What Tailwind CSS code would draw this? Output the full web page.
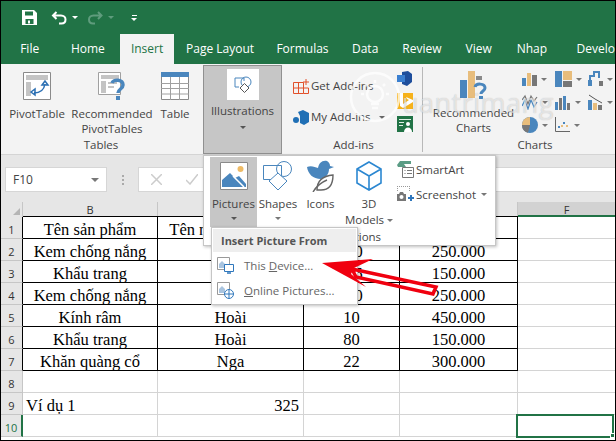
<!DOCTYPE html>
<html lang="en">

<head>
  <meta charset="UTF-8">
  <title>Excel Insert Pictures</title>
  <script src="https://cdn.jsdelivr.net/npm/@tailwindcss/browser@4"></script>
</head>

<body class="bg-white">
  <div class="relative w-[616px] h-[441px] overflow-hidden border border-black font-['Open_Sans',sans-serif] text-[11.5px] text-[#444]">

    <!-- title bar -->
    <div class="flex items-center h-[33px] bg-[#217346] pl-[21px]">
      <svg class="w-[15px] h-[15px]" viewBox="0 0 15 15"><path d="M0 0h12l3 3v12H0z" fill="#fff"/><path d="M3 1.500h8v4H3zM3.500 9h8v5h-8z" fill="#217346"/><path d="M6 10.500h2v3H6z" fill="#fff"/></svg>
      <svg class="w-[16px] h-[14px] ml-[14px]" viewBox="0 0 16 14" fill="none" stroke="#fff" stroke-width="2"><path d="M5.500 1 2 4.500 5.500 8M2 4.500h8c3 0 4.500 2 4.500 4s-1 4-4 4H8"/></svg>
      <div class="ml-[5px] border-x-[3px] border-t-[3px] border-x-transparent border-t-white"></div>
      <svg class="w-[15px] h-[14px] ml-[10px]" viewBox="0 0 15 14" fill="none" stroke="#5f9c7d" stroke-width="2"><path d="M10 1l3.500 3.500L10 8M13.500 4.500h-8c-3 0-4.500 2-4.500 4s1 4 4 4h2"/></svg>
      <div class="ml-[5px] border-x-[3px] border-t-[3px] border-x-transparent border-t-[#5f9c7d]"></div>
      <div class="ml-[17px] flex flex-col items-center gap-[2px]">
        <div class="w-[5px] h-px bg-white"></div>
        <div class="border-x-[3px] border-t-[3px] border-x-transparent border-t-white"></div>
      </div>
    </div>

    <!-- tabs -->
    <div class="flex h-[30px] bg-[#217346] text-white text-[12px]">
      <div class="w-[55px] flex items-center justify-center pl-[3px]">File</div>
      <div class="w-[66px] flex items-center justify-center">Home</div>
      <div class="w-[54px] flex items-center justify-center bg-[#f3f3f3] text-[#217346]">Insert</div>
      <div class="w-[93px] flex items-center justify-center pl-[1px]">Page Layout</div>
      <div class="w-[75px] flex items-center justify-center">Formulas</div>
      <div class="w-[52px] flex items-center justify-center">Data</div>
      <div class="w-[63px] flex items-center justify-center">Review</div>
      <div class="w-[52px] flex items-center justify-center">View</div>
      <div class="w-[56px] flex items-center justify-center">Nhap</div>
      <div class="pl-[17px] flex items-center whitespace-nowrap">Develo</div>
    </div>

    <!-- ribbon -->
    <div class="flex h-[91px] bg-[#f3f3f3] border-b border-[#d4d4d4]">
      <!-- tables -->
      <div class="w-[202px] flex flex-col">
        <div class="flex h-[72px] pt-[8px] text-center leading-[15px]">
          <div class="w-[72px] flex flex-col items-center">
            <svg class="w-[28px] h-[28px] mb-[6px]" viewBox="0 0 28 28"><path d="M.5.500h27v27H.5z" fill="#fff" stroke="#8a8a8a"/><path d="M3 3h22v5H3zM3 10h5v14H3z" fill="#c4c4c4"/><path d="M11 21c6 0 10-3 11-9M8 20l4-3v6zM22 9l-3 4h6z" fill="none" stroke="#2b6fb3" stroke-width="1.500"/></svg>
            <span>PivotTable</span>
          </div>
          <div class="w-[78px] flex flex-col items-center">
            <svg class="w-[28px] h-[28px] mb-[6px]" viewBox="0 0 28 28"><path d="M.5.500h22v22H.5z" fill="#fff" stroke="#a0a0a0"/><path d="M3 3h18v4H3zM3 9h5v12H3zM10 10h9v2h-9zM10 14h6v2h-6z" fill="#c4c4c4"/><path d="M14 11c1-4 11-4 11 2 0 4-5 4-5 8" fill="none" stroke="#4a86bd" stroke-width="3.500"/><path d="M18 24h4v4h-4z" fill="#4a86bd"/></svg>
            <span>Recommended<br>PivotTables</span>
          </div>
          <div class="w-[48px] flex flex-col items-center">
            <svg class="w-[28px] h-[28px] mb-[6px]" viewBox="0 0 28 28"><path d="M.5.500h27v27H.5z" fill="#fff" stroke="#8a8a8a"/><path d="M0 0h28v5H0z" fill="#4a86bd"/><path d="M0 11.500h28M0 16.500h28M0 22h28M9.500 5v23M18.500 5v23" stroke="#a0a0a0" fill="none"/></svg>
            <span>Table</span>
          </div>
        </div>
        <div class="text-center mt-auto pb-[1px] pr-[2px]">Tables</div>
      </div>

      <!-- illustrations -->
      <div class="w-[79px] flex flex-col items-center bg-[#c6c6c6] border border-[#909090] pt-[3px] mt-[1px]">
        <div class="w-[32px] h-[31px] bg-white flex items-center justify-center">
          <svg class="w-[18px] h-[17px]" viewBox="0 0 18 17" fill="none" stroke="#4a86bd"><path d="M10 5V2H1v9h4"/><circle cx="12" cy="6" r="5"/><path d="M10.500 7.500 15 12l-4.500 4.500L6 12z" fill="#fff" stroke="#555"/></svg>
        </div>
        <span class="mt-[3px] leading-[15px]">Illustrations</span>
        <div class="mt-[8px] border-x-[3px] border-t-[3px] border-x-transparent border-t-[#555]"></div>
      </div>

      <!-- add-ins -->
      <div class="w-[141px] flex flex-col relative">
        <div class="flex h-[72px] pl-[11px] pt-[6px]">
          <div class="w-[104px] flex flex-col gap-[15px] pt-[8px]">
            <div class="flex items-center gap-[2px] h-[16px]">
              <svg class="w-[16px] h-[15px]" viewBox="0 0 16 15" fill="none" stroke="#e2512b"><path d="M.5 3.500h10v11H.5zM.5 9h15v5.500H10.500M5.500 3.500v11M13 0v6M10 3h6"/></svg>
              <span>Get Add-ins</span>
            </div>
            <div class="flex items-center gap-[2px] h-[16px]">
              <svg class="w-[16px] h-[15px]" viewBox="0 0 16 15"><path d="M5 2l5-2 6 3v9l-5 3-4-2V6z" fill="#1f6fb5"/><circle cx="3" cy="10" r="3" fill="#1f6fb5"/></svg>
              <span>My Add-ins</span>
              <div class="ml-[6px] border-x-[3px] border-t-[3px] border-x-transparent border-t-[#666]"></div>
            </div>
          </div>
          <div class="flex flex-col gap-[7px] pt-[1px]">
            <svg class="w-[15px] h-[15px]" viewBox="0 0 15 15"><path d="M5 1l6-1 4 3v8l-5 4-5-2z" fill="#1e4e9c"/><path d="M0 4h8v7H0z" fill="#3a7fd0"/></svg>
            <svg class="w-[16px] h-[16px]" viewBox="0 0 16 16"><path d="M0 0h16v16H0z" fill="#f6b21b"/><path d="M3 0h3v11l6-4-2-1-1-2 7 3v2l-10 6-3-2z" fill="#fff"/></svg>
            <svg class="w-[16px] h-[16px]" viewBox="0 0 16 16"><path d="M0 0h16v16H0z" fill="#217346"/><path d="M2 3h12v1H2zM2 6h5v1H2zM2 9h4v1H2z" fill="#dff0e6"/><circle cx="11" cy="8" r="2" fill="#fff"/><path d="M7 16c0-6 8-6 8 0z" fill="#fff"/></svg>
          </div>
        </div>
        <div class="text-center mt-auto pb-[1px] pl-[2px]">Add-ins</div>
        <div class="absolute right-0 top-[3px] bottom-[2px] w-px bg-[#b8b8b8]"></div>
      </div>

      <!-- charts -->
      <div class="flex-1 flex flex-col">
        <div class="flex h-[72px] pt-[7px]">
          <div class="w-[97px] flex flex-col items-center text-center leading-[15px] pl-[4px]">
            <svg class="w-[28px] h-[28px] mb-[6px] shrink-0" viewBox="0 0 28 28"><path d="M0 9h7v18H0z" fill="#4a86bd"/><path d="M8 0h7v27H8z" fill="#e8bd7c"/><path d="M16 5h6v4h-6z" fill="#8a8a8a"/><path d="M15 16c1-4 10-4 10 1 0 3-4 3-4 6" fill="none" stroke="#4a86bd" stroke-width="3"/><path d="M19 25h4v3h-4z" fill="#4a86bd"/></svg>
            <span class="whitespace-nowrap">Recommended<br>Charts</span>
          </div>
          <div class="grid grid-cols-[33px_33px_20px] grid-rows-[23px_23px_23px] pl-[2px]">
            <div class="flex items-start gap-[4px]"><svg class="w-[15px] h-[15px]" viewBox="0 0 15 15"><path d="M0 7h4v8H0z" fill="#4a86bd"/><path d="M5 2h4v13H5z" fill="#e8bd7c"/><path d="M10 4h5v11h-5z" fill="#777"/></svg><div class="mt-[7px] border-x-[3px] border-t-[3px] border-x-transparent border-t-[#777]"></div></div>
            <div class="flex items-start gap-[4px]"><svg class="w-[17px] h-[16px] shrink-0" viewBox="0 0 17 16"><path d="M0 0h7v16H0z" fill="#4a86bd"/><path d="M8 0h9v9H8z" fill="#e8bd7c"/><path d="M8 10h9v6H8z" fill="#777"/></svg><div class="mt-[7px] border-x-[3px] border-t-[3px] border-x-transparent border-t-[#777]"></div></div>
            <div class="flex items-start gap-[4px]"><svg class="w-[15px] h-[15px] shrink-0" viewBox="0 0 15 15"><path d="M0 9h4v6H0z" fill="#4a86bd"/><path d="M2 9V5h4V1h5v6" fill="none" stroke="#4a86bd" stroke-width="2"/><path d="M11 10h4v5h-4z" fill="#777"/></svg><div class="mt-[7px] border-x-[3px] border-t-[3px] border-x-transparent border-t-[#777]"></div></div>
            <div class="flex items-start gap-[4px]"><svg class="w-[16px] h-[16px] shrink-0" viewBox="0 0 16 16" fill="none" stroke-width="1.200"><path d="M0 6l3-4 3 8 3-8 3 5 3-4" stroke="#777"/><path d="M0 12l3-6 3 9 3-9 3 7 3-5" stroke="#4a86bd"/></svg><div class="mt-[7px] border-x-[3px] border-t-[3px] border-x-transparent border-t-[#777]"></div></div>
            <div class="flex items-start gap-[4px]"><svg class="w-[16px] h-[16px] shrink-0" viewBox="0 0 16 16"><path d="M0 8h3v8H0zM8 2h3v14H8z" fill="#4a86bd"/><path d="M4 4h3v12H4zM12 9h3v7h-3z" fill="#777"/></svg><div class="mt-[7px] border-x-[3px] border-t-[3px] border-x-transparent border-t-[#777]"></div></div>
            <div class="flex items-start gap-[4px]"><svg class="w-[15px] h-[16px] shrink-0" viewBox="0 0 15 16"><path d="M0 6h4v10H0z" fill="#4a86bd"/><path d="M5 9h4v7H5z" fill="#e8bd7c"/><path d="M10 11h4v5h-4z" fill="#777"/><path d="M1 1l6 4 7 4" stroke="#555" fill="none"/></svg><div class="mt-[7px] border-x-[3px] border-t-[3px] border-x-transparent border-t-[#777]"></div></div>
            <div class="flex items-start gap-[4px]"><svg class="w-[16px] h-[16px] shrink-0" viewBox="0 0 16 16"><circle cx="8" cy="8" r="8" fill="#4a86bd"/><path d="M8 8V0A8 8 0 0 0 0 8z" fill="#e8bd7c"/><path d="M8 8H0a8 8 0 0 0 6 7.800z" fill="#777"/></svg><div class="mt-[7px] border-x-[3px] border-t-[3px] border-x-transparent border-t-[#777]"></div></div>
            <div class="flex items-start gap-[4px]"><svg class="w-[15px] h-[15px] shrink-0" viewBox="0 0 15 15"><path d="M.5 0v14.500H15" fill="none" stroke="#666"/><path d="M3 9h2v2H3zM8 5h2v2H8z" fill="#4a86bd"/><path d="M6 8h2v2H6zM11 8h2v2h-2z" fill="#e8bd7c"/></svg><div class="mt-[7px] border-x-[3px] border-t-[3px] border-x-transparent border-t-[#777]"></div></div>
          </div>
        </div>
        <div class="text-center mt-auto pb-[1px] pl-[32px]">Charts</div>
      </div>
    </div>

    <!-- formula bar -->
    <div class="h-[47px] bg-[#e6e6e6] pt-[12px] flex items-start">
      <div class="ml-[4px] w-[102px] h-[25px] bg-white border border-[#d6d6d6] flex items-center justify-between pl-[7px] pr-[7px] text-[12px]">
        <span>F10</span>
        <div class="border-x-[4px] border-t-[4px] border-x-transparent border-t-[#777]"></div>
      </div>
      <div class="ml-[15px] mt-[8px] flex flex-col gap-[2px]">
        <div class="w-[2px] h-[2px] bg-[#aaa]"></div>
        <div class="w-[2px] h-[2px] bg-[#aaa]"></div>
        <div class="w-[2px] h-[2px] bg-[#aaa]"></div>
      </div>
      <div class="ml-[14px] flex-1 h-[25px] bg-white border-y border-l border-[#d6d6d6] flex items-center pl-[12px] gap-[24px]">
        <svg class="w-[11px] h-[11px]" viewBox="0 0 11 11" stroke="#ccc" stroke-width="1.500"><path d="M0 0l11 11M11 0 0 11"/></svg>
        <svg class="w-[12px] h-[11px]" viewBox="0 0 12 11" fill="none" stroke="#ccc" stroke-width="1.500"><path d="M0 6l4 4 8-10"/></svg>
      </div>
    </div>

    <!-- sheet -->
    <div class="font-['Liberation_Serif',serif] text-[16.500px] leading-[26px] text-black">
      <!-- column headers -->
      <div class="flex h-[15px] bg-[#e6e6e6] font-['Open_Sans',sans-serif] text-[11px] leading-[16px] text-[#333] text-center">
        <div class="w-[22px] border-r border-[#c6c6c6] relative">
          <div class="absolute right-[2px] bottom-[2px] border-l-[7px] border-b-[7px] border-l-transparent border-b-[#b5b5b5]"></div>
        </div>
        <div class="w-[135px] border-r border-[#c6c6c6]">B</div>
        <div class="w-[146px] border-r border-[#c6c6c6]">C</div>
        <div class="w-[96px] border-r border-[#c6c6c6]">D</div>
        <div class="w-[118px] border-r border-[#c6c6c6]">E</div>
        <div class="flex-1 bg-[#d2d2d2] border-b-2 border-[#217346]">F</div>
      </div>

      <div class="flex h-[22px]"><div class="w-[22px] bg-[#e6e6e6] border-r border-b border-r-black border-b-[#c6c6c6] font-['Open_Sans',sans-serif] text-[11px] leading-[25px] text-[#333] text-center">1</div><div class="w-[135px] text-center border-r border-y border-black -mt-px h-[23px]">Tên sản phẩm</div><div class="w-[146px] text-center border-r border-y border-black -mt-px h-[23px] whitespace-nowrap overflow-hidden">Tên nhân viên bán</div><div class="w-[96px] text-center border-r border-y border-black -mt-px h-[23px]">Số lượng</div><div class="w-[118px] text-center border-r border-y border-black -mt-px h-[23px]">Giá</div><div class="flex-1 border-b border-[#d4d4d4]"></div></div>
      <div class="flex h-[22px]"><div class="w-[22px] bg-[#e6e6e6] border-r border-b border-r-black border-b-[#c6c6c6] font-['Open_Sans',sans-serif] text-[11px] leading-[25px] text-[#333] text-center">2</div><div class="w-[135px] text-center border-r border-b border-black">Kem chống nắng</div><div class="w-[146px] text-center border-r border-b border-black">Hoài</div><div class="w-[96px] pl-[6px] text-center border-r border-b border-black">50</div><div class="w-[118px] text-center border-r border-b border-black">250.000</div><div class="flex-1 border-b border-[#d4d4d4]"></div></div>
      <div class="flex h-[22px]"><div class="w-[22px] bg-[#e6e6e6] border-r border-b border-r-black border-b-[#c6c6c6] font-['Open_Sans',sans-serif] text-[11px] leading-[25px] text-[#333] text-center">3</div><div class="w-[135px] text-center border-r border-b border-black">Khẩu trang</div><div class="w-[146px] text-center border-r border-b border-black">Nga</div><div class="w-[96px] pl-[6px] text-center border-r border-b border-black">35</div><div class="w-[118px] text-center border-r border-b border-black">150.000</div><div class="flex-1 border-b border-[#d4d4d4]"></div></div>
      <div class="flex h-[22px]"><div class="w-[22px] bg-[#e6e6e6] border-r border-b border-r-black border-b-[#c6c6c6] font-['Open_Sans',sans-serif] text-[11px] leading-[25px] text-[#333] text-center">4</div><div class="w-[135px] text-center border-r border-b border-black">Kem chống nắng</div><div class="w-[146px] text-center border-r border-b border-black">Nga</div><div class="w-[96px] pl-[6px] text-center border-r border-b border-black">20</div><div class="w-[118px] text-center border-r border-b border-black">250.000</div><div class="flex-1 border-b border-[#d4d4d4]"></div></div>
      <div class="flex h-[22px]"><div class="w-[22px] bg-[#e6e6e6] border-r border-b border-r-black border-b-[#c6c6c6] font-['Open_Sans',sans-serif] text-[11px] leading-[25px] text-[#333] text-center">5</div><div class="w-[135px] text-center border-r border-b border-black">Kính râm</div><div class="w-[146px] text-center border-r border-b border-black">Hoài</div><div class="w-[96px] text-center border-r border-b border-black">10</div><div class="w-[118px] text-center border-r border-b border-black">450.000</div><div class="flex-1 border-b border-[#d4d4d4]"></div></div>
      <div class="flex h-[22px]"><div class="w-[22px] bg-[#e6e6e6] border-r border-b border-r-black border-b-[#c6c6c6] font-['Open_Sans',sans-serif] text-[11px] leading-[25px] text-[#333] text-center">6</div><div class="w-[135px] text-center border-r border-b border-black">Khẩu trang</div><div class="w-[146px] text-center border-r border-b border-black">Hoài</div><div class="w-[96px] text-center border-r border-b border-black">80</div><div class="w-[118px] text-center border-r border-b border-black">150.000</div><div class="flex-1 border-b border-[#d4d4d4]"></div></div>
      <div class="flex h-[22px]"><div class="w-[22px] bg-[#e6e6e6] border-r border-b border-r-black border-b-[#c6c6c6] font-['Open_Sans',sans-serif] text-[11px] leading-[25px] text-[#333] text-center">7</div><div class="w-[135px] text-center border-r border-b border-black">Khăn quàng cổ</div><div class="w-[146px] text-center border-r border-b border-black">Nga</div><div class="w-[96px] text-center border-r border-b border-black">22</div><div class="w-[118px] text-center border-r border-b border-black">300.000</div><div class="flex-1 border-b border-[#d4d4d4]"></div></div>
      <div class="flex h-[22px]"><div class="w-[22px] bg-[#e6e6e6] border-r border-b border-r-[#c6c6c6] border-b-[#c6c6c6] font-['Open_Sans',sans-serif] text-[11px] leading-[25px] text-[#333] text-center">8</div><div class="w-[135px] border-r border-b border-[#d4d4d4]"></div><div class="w-[146px] border-r border-b border-[#d4d4d4]"></div><div class="w-[96px] border-r border-b border-[#d4d4d4]"></div><div class="w-[118px] border-r border-b border-[#d4d4d4]"></div><div class="flex-1 border-b border-[#d4d4d4]"></div></div>
      <div class="flex h-[22px]"><div class="w-[22px] bg-[#e6e6e6] border-r border-b border-r-[#c6c6c6] border-b-[#c6c6c6] font-['Open_Sans',sans-serif] text-[11px] leading-[25px] text-[#333] text-center">9</div><div class="w-[135px] pl-[3px] border-r border-b border-[#d4d4d4]">Ví dụ 1</div><div class="w-[146px] pr-[4px] text-right border-r border-b border-[#d4d4d4]">325</div><div class="w-[96px] border-r border-b border-[#d4d4d4]"></div><div class="w-[118px] border-r border-b border-[#d4d4d4]"></div><div class="flex-1 border-b border-[#d4d4d4]"></div></div>
      <div class="flex h-[22px]"><div class="w-[22px] bg-[#e6e6e6] border-r-2 border-b border-r-[#217346] border-b-[#c6c6c6] font-['Open_Sans',sans-serif] text-[11px] leading-[25px] text-[#217346] text-center">10</div><div class="w-[135px] border-r border-b border-[#d4d4d4]"></div><div class="w-[146px] border-r border-b border-[#d4d4d4]"></div><div class="w-[96px] border-r border-b border-[#d4d4d4]"></div><div class="w-[118px] border-r border-b border-[#d4d4d4]"></div><div class="flex-1 relative border-b border-[#d4d4d4]">
        <div class="absolute -left-[2px] -top-[1px] w-[98px] h-[24px] border-2 border-[#217346]"></div>
        <div class="absolute left-[92px] top-[18px] w-[5px] h-[5px] bg-[#217346] border border-white"></div>
      </div></div>
    </div>

    <!-- watermark -->
    <div class="absolute left-[348px] top-[70px] flex items-center gap-[1px] text-white/60 font-['Open_Sans',sans-serif] text-[27px] leading-[34px] tracking-[0.5px] [text-shadow:0_0_1px_rgba(0,0,0,0.25)] pointer-events-none">
      <svg class="w-[52px] h-[52px]" viewBox="0 0 52 52" fill="none" stroke="#fff" stroke-opacity=".75" stroke-width="2.500"><circle cx="26" cy="26" r="24"/><circle cx="26" cy="23" r="8"/><path d="M22 33h8M23 37h6M26 9v3M12 23h3M37 23h3M16 13l2 2M36 13l-2 2"/></svg>
      <span class="pt-[12px]">uantrimang</span>
    </div>

    <!-- illustrations dropdown -->
    <div class="absolute left-[202px] top-[154px] w-[293px] h-[91px] bg-white border border-[#c6c6c6] shadow-[1px_1px_3px_rgba(0,0,0,0.25)] flex flex-col leading-[15px]">
      <div class="flex h-[72px] pt-[1px] pl-[6px]">
        <div class="w-[47px] h-[70px] bg-[#c6c6c6] flex flex-col items-center pt-[5px]">
          <svg class="w-[28px] h-[28px]" viewBox="0 0 28 28"><path d="M.5.500h27v27H.5z" fill="#fff" stroke="#8a8a8a"/><circle cx="20.500" cy="7" r="3" fill="#eebb66"/><path d="M2 25V18L10 11l5 5 4-2 7 8v3z" fill="#4a86bd"/><path d="M13 14l11 11" stroke="#fff" stroke-width="1.500"/></svg>
          <span class="mt-[6px]">Pictures</span>
          <div class="mt-[6px] border-x-[3px] border-t-[3px] border-x-transparent border-t-[#555]"></div>
        </div>
        <div class="w-[42px] flex flex-col items-center pt-[4px]">
          <svg class="w-[30px] h-[30px]" viewBox="0 0 30 30" fill="none" stroke="#4a86bd"><path d="M.5 4.500h18v14H.5z"/><circle cx="21" cy="8" r="7.500"/><path d="M15 12l9 8-9 9-9-9z" fill="#fff" stroke="#4a86bd"/></svg>
          <span class="mt-[5px]">Shapes</span>
          <div class="mt-[6px] border-x-[3px] border-t-[3px] border-x-transparent border-t-[#777]"></div>
        </div>
        <div class="w-[43px] flex flex-col items-center pt-[3px]">
          <svg class="w-[28px] h-[32px]" viewBox="0 0 28 32"><path d="M0 7c4-2 8 0 11 1 1-5 4-8 9-7 2 1 3 3 3 5l4 1-5 2c0 5-3 9-8 10C6 19 1 14 0 7z" fill="#4a86bd"/><path d="M10 30c0-9 5-14 16-15 0 10-4 15-12 15z" fill="#fff" stroke="#666" stroke-width="1.400"/><path d="M6 32c3-5 9-10 14-12" stroke="#666" stroke-width="1.400" fill="none"/></svg>
          <span class="mt-[4px]">Icons</span>
        </div>
        <div class="w-[54px] flex flex-col items-center pt-[4px]">
          <svg class="w-[26px] h-[30px]" viewBox="0 0 26 30" fill="none" stroke="#2b87d1" stroke-width="1.600"><path d="M13 1l12 7v14l-12 7-12-7V8zM1 8l12 7 12-7M13 15v14"/></svg>
          <span class="mt-[5px]">3D</span>
          <span class="mt-[1px] whitespace-nowrap">Models<span class="inline-block ml-[3px] mb-[2px] border-x-[3px] border-t-[3px] border-x-transparent border-t-[#777]"></span></span>
        </div>
        <div class="flex flex-col gap-[8px] pl-[1px] pt-[4px]">
          <div class="flex items-center gap-[2px]">
            <svg class="w-[17px] h-[17px]" viewBox="0 0 17 17"><path d="M0 4 3 0h11v3H7l2 3H1z" fill="#5b9c85"/><path d="M5.500 6.500h11v10h-11z" fill="#fff" stroke="#777"/><path d="M7.500 9h1v1h-1zM10 9h5v1h-5zM7.500 12h1v1h-1zM10 12h5v1h-5z" fill="#777"/></svg>
            <span>SmartArt</span>
          </div>
          <div class="flex items-center gap-[2px]">
            <svg class="w-[17px] h-[16px]" viewBox="0 0 17 16"><path d="M2 .500h10M.5 0v5M12.500 0v6" stroke="#999" stroke-dasharray="1 1" fill="none"/><path d="M0 8h2l1-2h3l1 2h2v7H0z" fill="#777"/><circle cx="4.500" cy="11" r="2" fill="#fff"/><path d="M11 11h6v2h-6zM13 9h2v6h-2z" fill="#2f77bc"/></svg>
            <span>Screenshot</span>
            <div class="ml-[3px] border-x-[3px] border-t-[3px] border-x-transparent border-t-[#777]"></div>
          </div>
        </div>
      </div>
      <div class="text-center mt-auto pb-[1px]">Illustrations</div>
    </div>

    <!-- insert picture submenu -->
    <div class="absolute left-[210px] top-[226px] w-[147px] h-[78px] bg-white border border-[#c6c6c6] shadow-[1px_1px_3px_rgba(0,0,0,0.25)] px-px pt-[1px] text-[11.5px] leading-[15px]">
      <div class="h-[23px] bg-[#eeeeee] pl-[8px] flex items-center font-bold text-[#555] text-[11px]">Insert Picture From</div>
      <div class="h-[25px] flex items-center pl-[4px] mt-[1px] text-[#666]">
        <svg class="w-[17px] h-[17px]" viewBox="0 0 17 17"><path d="M.5.500h12v12H.5z" fill="#fff" stroke="#999"/><path d="M2 11V7l3-3 3 3v4z" fill="#a9c4df"/><path d="M7.500 7.500h9v7h-9z" fill="#fff" stroke="#2f77bc"/><path d="M10 16h4" stroke="#2f77bc" stroke-width="1.500"/></svg>
        <span class="ml-[10px]">This <u>D</u>evice...</span>
      </div>
      <div class="h-[24px] flex items-center pl-[4px] text-[#666]">
        <svg class="w-[17px] h-[17px]" viewBox="0 0 17 17"><path d="M.5.500h12v12H.5z" fill="#fff" stroke="#999"/><path d="M2 11V7l3-3 3 3v4z" fill="#a9c4df"/><circle cx="12" cy="12" r="4.500" fill="#fff" stroke="#2f77bc"/><path d="M7.500 12h9M12 7.500v9" stroke="#2f77bc"/></svg>
        <span class="ml-[10px]"><u>O</u>nline Pictures...</span>
      </div>
    </div>

    <!-- red arrow -->
    <svg class="absolute -left-px -top-px pointer-events-none" width="616" height="441" viewBox="0 0 616 441">
      <path d="M322 263 373 259 354 268 351 274 366 287Z" fill="#f0000f"/>
      <path d="M352 269 436 287 433 294 356 277Z" fill="none" stroke="#f0000f" stroke-width="3.500"/>
    </svg>
  </div>
</body>

</html>
